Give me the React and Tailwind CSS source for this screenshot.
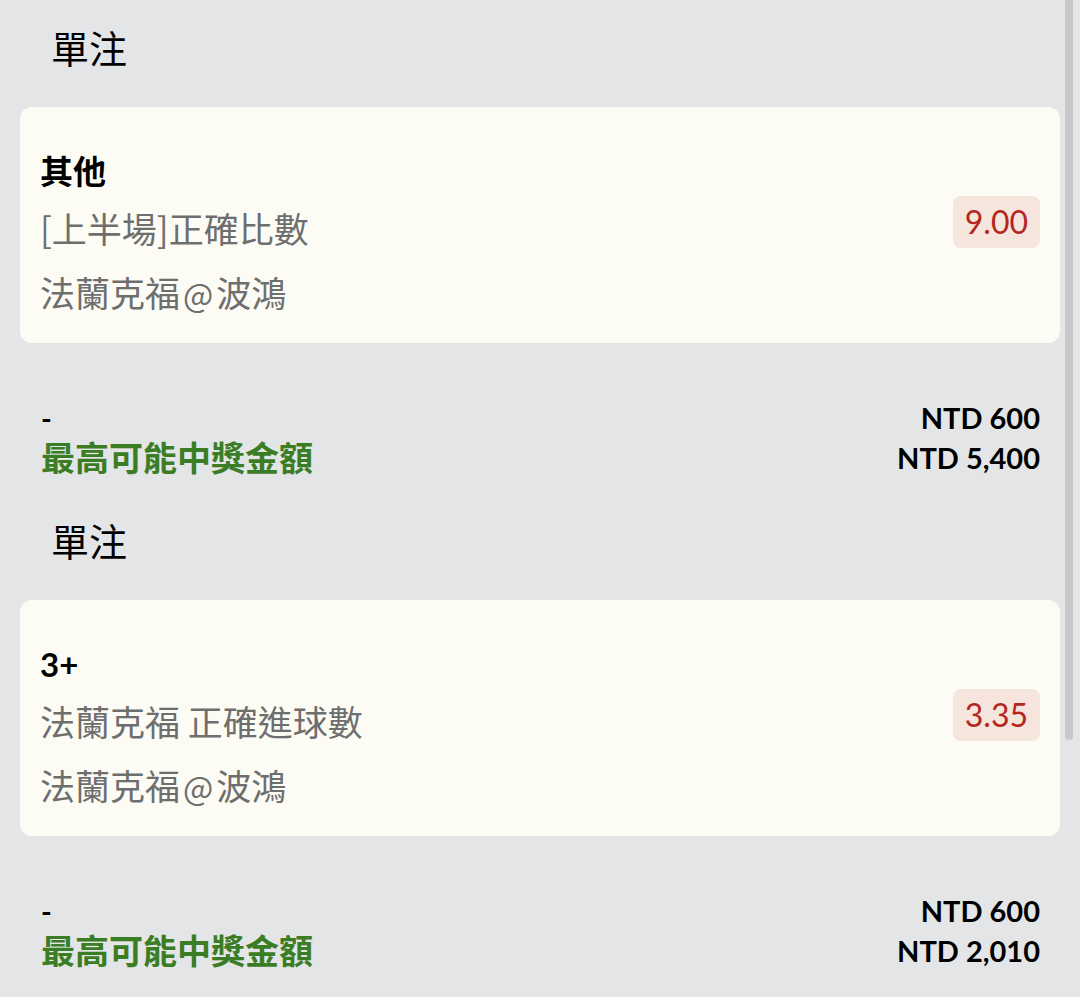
const FONT = { fontFamily: 'Lato, "Noto Sans CJK TC", "Noto Sans", sans-serif' };
const CJK = { fontFamily: '"Noto Sans CJK TC", "Noto Sans", sans-serif' };

const bets = [
  {
    title: "其他",
    market: "[上半場]正確比數",
    home: "法蘭克福",
    away: "波鴻",
    odds: "9.00",
    stake: "NTD 600",
    payout: "NTD 5,400",
  },
  {
    title: "3+",
    market: "法蘭克福 正確進球數",
    home: "法蘭克福",
    away: "波鴻",
    odds: "3.35",
    stake: "NTD 600",
    payout: "NTD 2,010",
  },
];

function BetSection({ bet }) {
  return (
    <div className="pb-[39px]">
      <div className="h-[48px] pl-[31px] text-[38px] leading-[48px] text-black">單注</div>

      <div className="mt-[35px] flex h-[236px] items-center justify-between rounded-[12px] bg-[#fcfcf4] pl-[20px] pr-[20px]">
        <div className="flex flex-col self-start pt-[44px]">
          <div className="h-[40px] text-[33px] font-bold leading-[40px] text-black">{bet.title}</div>
          <div className="mt-[13px] h-[48px] text-[35px] leading-[48px] text-[#6e6e6e]" style={CJK}>{bet.market}</div>
          <div className="mt-[16px] h-[48px] text-[35px] leading-[48px] text-[#6e6e6e]" style={CJK}>
            {bet.home}
            <span className="mx-[3px] text-[32px]">@</span>
            {bet.away}
          </div>
        </div>
        <div className="mt-[-6px] flex h-[52px] items-center rounded-[8px] bg-[#f6e5dd] px-[12px] text-[32px] leading-none text-[#b5261e]">
          {bet.odds}
        </div>
      </div>

      <div className="mt-[55px] flex justify-between pl-[21px] pr-[20px]">
        <div className="flex flex-col">
          <div className="h-[40px] text-[29px] font-bold leading-[40px] text-black">-</div>
          <div className="h-[40px] text-[34px] font-bold leading-[40px] text-[#3b7d24]">最高可能中獎金額</div>
        </div>
        <div className="flex flex-col items-end">
          <div className="h-[40px] text-[29px] font-bold leading-[40px] text-black">{bet.stake}</div>
          <div className="h-[40px] text-[29px] font-bold leading-[40px] text-black">{bet.payout}</div>
        </div>
      </div>
    </div>
  );
}

export default function App() {
  return (
    <div className="relative h-[997px] w-[1080px] overflow-hidden bg-[#e4e5e7]" style={FONT}>
      <div className="px-[20px] pt-[24px]">
        {bets.map((b, i) => (
          <BetSection key={i} bet={b} />
        ))}
      </div>
      <div className="absolute right-[7px] top-0 h-[740px] w-[8px] rounded-b-[4px] bg-[#c8c9cb]" />
    </div>
  );
}
